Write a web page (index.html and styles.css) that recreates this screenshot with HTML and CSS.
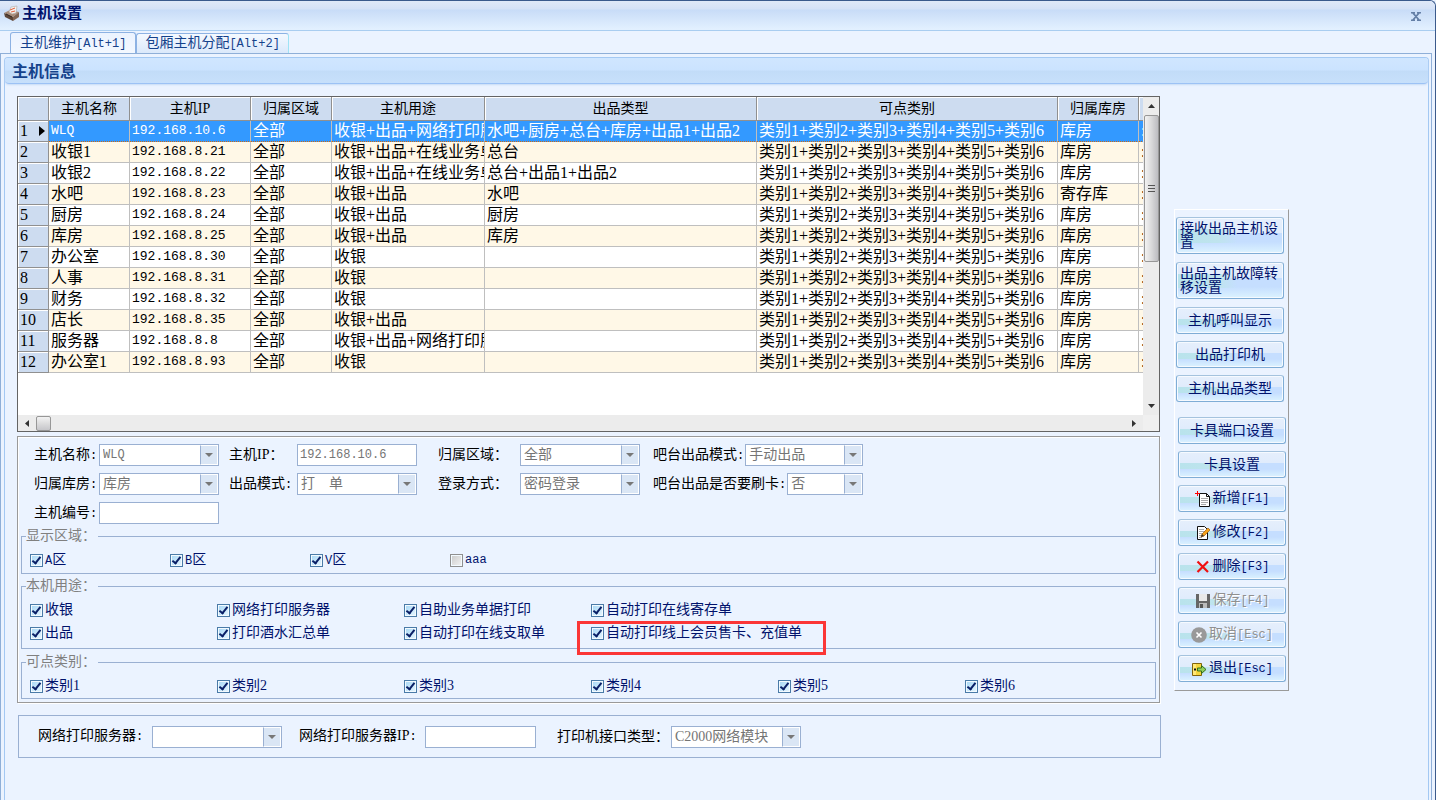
FILE: index.html
```html
<!DOCTYPE html>
<html lang="zh-CN">
<head>
<meta charset="utf-8">
<title>主机设置</title>
<link rel="stylesheet" href="styles.css">
</head>
<body>
<div class="window">
  <header class="titlebar">
    <svg class="app-icon" viewBox="0 0 16 16" width="16" height="16" aria-hidden="true">
      <path d="M0 8l6-3 9 2-6 5z" fill="#a98c78"/><path d="M0 8l9 4v4L1 12z" fill="#5d4638"/><path d="M9 12l6-5v5l-6 4z" fill="#806453"/>
      <path d="M5 7l2-5 6-1-1 7-4 1z" fill="#f4f2f0" stroke="#b0a9a4" stroke-width=".6"/><path d="M6 5l5-2M7 7l4-1" stroke="#e2603c"/><path d="M2 9l6 3" stroke="#33261f"/>
    </svg>
    <h1 class="title">主机设置</h1>
    <button class="close" type="button" aria-label="关闭"><svg viewBox="0 0 10 9" width="10" height="9"><path d="M0 .5h4M6 .5h4M0 8.500h4M6 8.500h4M2 1l6 7M8 1L2 8" stroke="#647fa6" stroke-width="1.800" fill="none"/></svg></button>
  </header>
  <nav class="tabs">
    <button class="tab active" type="button">主机维护<span class="mono">[Alt+1]</span></button>
    <button class="tab" type="button">包厢主机分配<span class="mono">[Alt+2]</span></button>
  </nav>
  <main class="page">
    <section class="group">
      <h2 class="group-title">主机信息</h2>
      <div class="body">
        <div class="left">
          <div class="grid-box">
            <div class="grid-view">
              <table class="hosts">
                <colgroup><col class="c-no"><col class="c-s"><col class="c-ip"><col class="c-s"><col class="c-use"><col class="c-out"><col class="c-cat"><col class="c-s"><col></colgroup>
                <thead><tr><th></th><th>主机名称</th><th>主机IP</th><th>归属区域</th><th>主机用途</th><th>出品类型</th><th>可点类别</th><th>归属库房</th><th></th></tr></thead>
                <tbody>
                <tr class="selected"><th>1<svg class="pointer" viewBox="0 0 6 10" width="6" height="10"><path d="M0 0l6 5-6 5z"/></svg></th><td class="mono">WLQ</td><td class="mono">192.168.10.6</td><td>全部</td><td>收银+出品+网络打印服</td><td>水吧+厨房+总台+库房+出品1+出品2</td><td>类别1+类别2+类别3+类别4+类别5+类别6</td><td>库房</td><td>:</td></tr>
                <tr><th>2</th><td>收银1</td><td class="mono">192.168.8.21</td><td>全部</td><td>收银+出品+在线业务单</td><td>总台</td><td>类别1+类别2+类别3+类别4+类别5+类别6</td><td>库房</td><td>:</td></tr>
                <tr><th>3</th><td>收银2</td><td class="mono">192.168.8.22</td><td>全部</td><td>收银+出品+在线业务单</td><td>总台+出品1+出品2</td><td>类别1+类别2+类别3+类别4+类别5+类别6</td><td>库房</td><td>:</td></tr>
                <tr><th>4</th><td>水吧</td><td class="mono">192.168.8.23</td><td>全部</td><td>收银+出品</td><td>水吧</td><td>类别1+类别2+类别3+类别4+类别5+类别6</td><td>寄存库</td><td>:</td></tr>
                <tr><th>5</th><td>厨房</td><td class="mono">192.168.8.24</td><td>全部</td><td>收银+出品</td><td>厨房</td><td>类别1+类别2+类别3+类别4+类别5+类别6</td><td>库房</td><td>:</td></tr>
                <tr><th>6</th><td>库房</td><td class="mono">192.168.8.25</td><td>全部</td><td>收银+出品</td><td>库房</td><td>类别1+类别2+类别3+类别4+类别5+类别6</td><td>库房</td><td>:</td></tr>
                <tr><th>7</th><td>办公室</td><td class="mono">192.168.8.30</td><td>全部</td><td>收银</td><td></td><td>类别1+类别2+类别3+类别4+类别5+类别6</td><td>库房</td><td>:</td></tr>
                <tr><th>8</th><td>人事</td><td class="mono">192.168.8.31</td><td>全部</td><td>收银</td><td></td><td>类别1+类别2+类别3+类别4+类别5+类别6</td><td>库房</td><td>:</td></tr>
                <tr><th>9</th><td>财务</td><td class="mono">192.168.8.32</td><td>全部</td><td>收银</td><td></td><td>类别1+类别2+类别3+类别4+类别5+类别6</td><td>库房</td><td>:</td></tr>
                <tr><th>10</th><td>店长</td><td class="mono">192.168.8.35</td><td>全部</td><td>收银+出品</td><td></td><td>类别1+类别2+类别3+类别4+类别5+类别6</td><td>库房</td><td>:</td></tr>
                <tr><th>11</th><td>服务器</td><td class="mono">192.168.8.8</td><td>全部</td><td>收银+出品+网络打印服</td><td></td><td>类别1+类别2+类别3+类别4+类别5+类别6</td><td>库房</td><td>:</td></tr>
                <tr><th>12</th><td>办公室1</td><td class="mono">192.168.8.93</td><td>全部</td><td>收银</td><td></td><td>类别1+类别2+类别3+类别4+类别5+类别6</td><td>库房</td><td>:</td></tr>
                </tbody>
              </table>
            </div>
            <div class="vbar">
              <svg class="arrow" viewBox="0 0 7 4" width="7" height="4"><path d="M0 4l3.500-4L7 4z"/></svg>
              <div class="vthumb"><i></i><i></i><i></i></div>
              <svg class="arrow end" viewBox="0 0 7 4" width="7" height="4"><path d="M0 0l3.500 4L7 0z"/></svg>
            </div>
            <div class="hbar">
              <svg class="arrow" viewBox="0 0 4 7" width="4" height="7"><path d="M4 0L0 3.500 4 7z"/></svg>
              <div class="hthumb"></div>
              <svg class="arrow end" viewBox="0 0 4 7" width="4" height="7"><path d="M0 0l4 3.500L0 7z"/></svg>
            </div>
            <div class="corner"></div>
          </div>

          <form class="details">
            <div class="fields">
              <label for="name">主机名称<span class="mono">:</span></label>
              <span class="combo"><select id="name" class="mono" disabled><option>WLQ</option></select></span>
              <label class="gap-s" for="ip">主机IP：</label>
              <input id="ip" class="box mono" value="192.168.10.6" disabled>
              <label class="gap-m" for="area">归属区域：</label>
              <span class="combo"><select id="area" disabled><option>全部</option></select></span>
              <span class="tail"><label for="barmode">吧台出品模式<span class="mono">:</span></label><span class="combo"><select id="barmode" disabled><option>手动出品</option></select></span></span>

              <label for="store">归属库房<span class="mono">:</span></label>
              <span class="combo"><select id="store" disabled><option>库房</option></select></span>
              <label class="gap-s" for="outmode">出品模式<span class="mono">:</span></label>
              <span class="combo"><select id="outmode" disabled><option>打　单</option></select></span>
              <label class="gap-m" for="login">登录方式：</label>
              <span class="combo"><select id="login" disabled><option>密码登录</option></select></span>
              <span class="tail"><label for="card">吧台出品是否要刷卡<span class="mono">:</span></label><span class="combo"><select id="card" disabled><option>否</option></select></span></span>

              <label for="code">主机编号<span class="mono">:</span></label>
              <input id="code" class="box">
            </div>
            <fieldset class="set areas">
              <legend>显示区域：</legend>
              <label class="check"><input type="checkbox" checked><span><span class="mono">A</span>区</span></label>
              <label class="check"><input type="checkbox" checked><span><span class="mono">B</span>区</span></label>
              <label class="check"><input type="checkbox" checked><span><span class="mono">V</span>区</span></label>
              <label class="check"><input type="checkbox" disabled><span class="mono">aaa</span></label>
            </fieldset>
            <fieldset class="set uses">
              <legend>本机用途：</legend>
              <label class="check"><input type="checkbox" checked><span>收银</span></label>
              <label class="check"><input type="checkbox" checked><span>网络打印服务器</span></label>
              <label class="check"><input type="checkbox" checked><span>自助业务单据打印</span></label>
              <label class="check"><input type="checkbox" checked><span>自动打印在线寄存单</span></label>
              <label class="check"><input type="checkbox" checked><span>出品</span></label>
              <label class="check"><input type="checkbox" checked><span>打印酒水汇总单</span></label>
              <label class="check"><input type="checkbox" checked><span>自动打印在线支取单</span></label>
              <label class="check marked"><input type="checkbox" checked><span>自动打印线上会员售卡、充值单</span></label>
            </fieldset>
            <fieldset class="set cats">
              <legend>可点类别：</legend>
              <label class="check"><input type="checkbox" checked><span>类别1</span></label>
              <label class="check"><input type="checkbox" checked><span>类别2</span></label>
              <label class="check"><input type="checkbox" checked><span>类别3</span></label>
              <label class="check"><input type="checkbox" checked><span>类别4</span></label>
              <label class="check"><input type="checkbox" checked><span>类别5</span></label>
              <label class="check"><input type="checkbox" checked><span>类别6</span></label>
            </fieldset>
          </form>

          <form class="printer">
            <label class="p1" for="psrv">网络打印服务器<span class="mono">:</span></label>
            <span class="combo wide-combo"><select id="psrv" disabled><option></option></select></span>
            <label class="p2" for="pip">网络打印服务器IP<span class="mono">:</span></label>
            <input id="pip" class="box pip">
            <label class="p3" for="ptype">打印机接口类型：</label>
            <span class="combo wide-combo"><select id="ptype" disabled><option>C2000网络模块</option></select></span>
          </form>
        </div>

        <aside class="side">
          <div class="stack first">
            <button class="btn tall" type="button">接收出品主机设置</button>
            <button class="btn tall" type="button">出品主机故障转移设置</button>
            <button class="btn" type="button">主机呼叫显示</button>
            <button class="btn" type="button">出品打印机</button>
            <button class="btn" type="button">主机出品类型</button>
          </div>
          <div class="stack second">
            <button class="btn" type="button">卡具端口设置</button>
            <button class="btn" type="button">卡具设置</button>
            <button class="btn" type="button"><svg viewBox="0 0 16 16" width="16" height="16"><path d="M4.500 2.500h7l3 3v10h-10z" fill="#fff" stroke="#111"/><path d="M11.500 2.500v3h3" fill="none" stroke="#111"/><path d="M6 7.500h7M6 9.500h7M6 11.500h7M6 13.500h5" stroke="#aaa"/><path d="M0 2.500h5M2.500 0v5" stroke="#f00"/></svg><span>新增<span class="mono">[F1]</span></span></button>
            <button class="btn" type="button"><svg viewBox="0 0 16 16" width="16" height="16"><path d="M2.500 1.500h7l3 3v10h-10z" fill="#fff" stroke="#111"/><path d="M4 4.500h5M4 6.500h6M4 8.500h4M4 10.500h3M4 12.500h3" stroke="#aaa"/><path d="M13 3l2 2-6 6-3 1 1-3z" fill="#f5a21c" stroke="#a45f0a" stroke-width=".7"/><path d="M6 12l1-3 2 2z" fill="#333"/></svg><span>修改<span class="mono">[F2]</span></span></button>
            <button class="btn" type="button"><svg viewBox="0 0 16 16" width="16" height="16"><path d="M2.500 2.500l10.500 10.500M13 2.500L2.500 13" stroke="#f01010" stroke-width="2.200"/></svg><span>删除<span class="mono">[F3]</span></span></button>
            <button class="btn" type="button" disabled><svg viewBox="0 0 16 16" width="16" height="16"><path d="M1 1h14v14H1z" fill="#666"/><path d="M4 1h8v7H4z" fill="#e9e9e9"/><path d="M4 10h8v5H4z" fill="#bbb"/><path d="M5 11h3v4H5z" fill="#555"/></svg><span>保存<span class="mono">[F4]</span></span></button>
            <button class="btn" type="button" disabled><svg viewBox="0 0 16 16" width="16" height="16"><circle cx="8" cy="8" r="7.800" fill="#999"/><path d="M5.500 5.500l5 5M10.500 5.500l-5 5" stroke="#fff" stroke-width="1.600"/></svg><span>取消<span class="mono">[Esc]</span></span></button>
            <button class="btn" type="button"><svg viewBox="0 0 16 16" width="16" height="16"><path d="M1.500 2.500h9v12h-9z" fill="#f4d63c" stroke="#80640c"/><path d="M2 3h3v11H2z" fill="#ffe875"/><path d="M3 8.500h2" stroke="#111" stroke-width="2"/><path d="M6.500 7h4V4.500l4.500 4-4.500 4V10h-4z" fill="#8fd05c" stroke="#346e1b"/></svg><span>退出<span class="mono">[Esc]</span></span></button>
          </div>
        </aside>
      </div>
    </section>
  </main>
</div>
</body>
</html>
```
FILE: styles.css
```css
*, *::before, *::after { box-sizing: border-box; }

body {
  margin: 0;
  background: #ebf3ff;
  color: #000;
  font: 400 14px/18px "Liberation Serif", "Noto Sans CJK SC", serif;
}

button, input, select { font: inherit; color: inherit; margin: 0; }
.mono { font-family: "Liberation Mono", "Noto Sans CJK SC", monospace; font-size: 12px; }

.window {
  display: flex;
  flex-direction: column;
  min-height: 100vh;
  border-top: 1px solid #3b5a8c;
  border-right: 1px solid #3b5a8c;
  border-radius: 0 6px 0 0;
}

/* title bar */
.titlebar {
  display: flex;
  align-items: center;
  height: 30px;
  padding: 0 14px 6px 4px;
  background: linear-gradient(#e0e9f8 0, #d5e2f7 8px, #c8dcf7 9px, #e2f0ff 28px);
  border-bottom: 1px solid #a9cdf0;
  border-radius: 0 6px 0 0;
}
.title { flex: 1; margin: 0 0 0 2px; font-size: 15px; line-height: 20px; font-weight: 700; color: #00126b; }
.close { align-self: flex-end; display: flex; padding: 0 0 3px; border: 0; background: none; }

/* tabs */
.tabs { display: flex; align-items: flex-end; height: 22px; padding-left: 10px; }
.tab {
  height: 20px;
  padding: 0 8px;
  border: 1px solid #8db2e3;
  border-right-color: #9fe3f5;
  border-bottom: 0;
  border-radius: 3px 3px 0 0;
  background: linear-gradient(#f4f9ff, #dbe9fb);
  color: #15428b;
  line-height: 18px;
}
.tab.active { height: 21px; padding: 0 9px; background: linear-gradient(#ebf3ff, #f3f8ff); border-right-color: #8db2e3; }

.page {
  flex: 1;
  display: flex;
  margin-right: 3px;
  padding: 3px 2px 0 3px;
  border: 1px solid #8fafd8;
  border-bottom: 0;
}
.group { flex: 1; border: 1px solid #a3c8f3; border-bottom: 0; border-radius: 4px 4px 0 0; min-width: 0; }
.group-title {
  height: 26px;
  margin: 0;
  padding: 3px 7px;
  border-bottom: 1px solid #9cc2f5;
  border-radius: 3px 3px 4px 4px;
  box-shadow: 0 1px 2px #c7dcf6;
  background: linear-gradient(#d0e6ff 0, #cbe3ff 12px, #c2dcf8 13px, #c7e0fb);
  font-size: 16px;
  line-height: 22px;
  font-weight: 700;
  color: #15428b;
}
.body { display: grid; grid-template-columns: minmax(0, 1fr) 115px; gap: 14px; padding: 12px 139px 0 12px; align-items: start; }
.left { min-width: 0; }

/* host list */
.grid-box {
  display: grid;
  grid-template-columns: minmax(0, 1fr) 16px;
  grid-template-rows: 318px 16px;
  border: 1px solid #646464;
  background: #fff;
}
.grid-view { overflow: hidden; }
.hosts { width: 1200px; table-layout: fixed; border-collapse: separate; border-spacing: 0; font-size: 16px; line-height: 20px; }
.hosts .mono { font-size: 13px; }
.c-no { width: 31px; }
.c-s { width: 81px; }
.c-ip { width: 121px; }
.c-use { width: 153px; }
.c-out { width: 272px; }
.c-cat { width: 301px; }
.hosts th, .hosts td {
  height: 21px;
  padding: 0 0 0 2px;
  overflow: hidden;
  white-space: nowrap;
  text-align: left;
  font-weight: 400;
  border-right: 1px solid #bfbfbf;
  border-bottom: 1px solid #bfbfbf;
}
.hosts th { background: #cddcf0; box-shadow: inset 1px 1px #fff; border-color: #909090; }
.hosts thead th { height: 24px; padding: 0; text-align: center; font-size: 14px; }
.hosts tbody tr:nth-child(even) td { background: #fff8e7; }
.hosts .selected td { background: #39f; color: #fff; border-bottom: 1px dotted #d06a10; }
.pointer { margin-left: 11px; }

/* scroll bars */
.vbar { display: flex; flex-direction: column; align-items: center; background: #ececec; padding: 7px 0; }
.vthumb {
  display: flex; flex-direction: column; justify-content: center; align-items: center; gap: 2px;
  width: 15px; height: 147px; margin-top: 7px;
  border: 1px solid #979797; border-radius: 2px;
  background: linear-gradient(to right, #f3f3f3, #d9d9da 50%, #bcbcc0);
}
.vthumb i { width: 7px; height: 1px; background: #555; }
.hbar { display: flex; align-items: center; padding: 0 7px; background: #ececec; }
.hthumb { width: 15px; height: 15px; margin-left: 7px; border: 1px solid #979797; border-radius: 2px; background: linear-gradient(#f3f3f3, #dcdcdd 50%, #c6c6ca); }
.arrow { fill: #333; }
.vbar .end { margin-top: auto; }
.hbar .end { margin-left: auto; }
.corner { background: #f0f0f0; }

/* detail form */
.details { margin-top: 4px; padding: 7px 3px 3px; border: 1px solid #9a9a9a; box-shadow: inset 1px 1px #fff, 1px 1px #fff; }
.fields {
  display: grid;
  grid-template-columns: 65px 120px 78px 120px 103px 120px 223px;
  gap: 7px 0;
  padding-left: 13px;
  align-items: center;
}
.fields label { white-space: nowrap; }
.gap-s { padding-left: 10px; }
.gap-m { padding-left: 21px; }
.tail { display: flex; align-items: center; padding-left: 13px; }
.tail .combo { flex: 1; margin-left: 1px; }
.box { width: 100%; height: 22px; padding: 0 2px; border: 1px solid #9ab0d2; border-radius: 0; background: #fff; }
.box:disabled { color: #757575; }
.combo { position: relative; display: block; height: 22px; }
.combo select {
  appearance: none;
  display: block;
  width: 100%;
  height: 22px;
  padding: 0 19px 0 3px;
  border: 1px solid #9ab0d2;
  border-radius: 0;
  background: #fff;
  color: #757575;
  opacity: 1;
}
.combo::before { content: ""; position: absolute; top: 1px; right: 1px; bottom: 1px; width: 18px; border: 1px solid #fff; border-left-color: #9ab0d2; background: #dae6f5; pointer-events: none; }
.combo::after { content: ""; position: absolute; top: 9px; right: 6px; border: 4px solid transparent; border-top-color: #777; border-bottom: 0; pointer-events: none; }

.set {
  display: grid;
  margin: 4px 0 0;
  padding: 7px 8px 3px;
  border: 1px solid #9ab0d2;
  gap: 5px 0;
  min-width: 0;
}
.set legend { margin-left: -4px; padding: 0; width: 72px; height: 16px; line-height: 16px; color: #808080; }
.areas { grid-template-columns: repeat(4, 140px); padding-bottom: 4px; }
.uses { grid-template-columns: repeat(4, 187px); padding-bottom: 6px; }
.cats { grid-template-columns: repeat(6, 187px); margin-top: 5px; }
.check { display: flex; align-items: center; gap: 2px; height: 18px; white-space: nowrap; color: #00126b; position: relative; }
.check input {
  appearance: none;
  flex: none;
  position: relative;
  width: 13px;
  height: 13px;
  border: 1px solid #4a7ba8;
  box-shadow: inset 0 0 0 1px #f2faff;
  background: linear-gradient(135deg, #a5d6f5, #e8f7ff);
}
.check input:checked::after {
  content: "";
  position: absolute;
  left: 3px;
  top: 0;
  width: 5px;
  height: 9px;
  border: solid #0a1f66;
  border-width: 0 2px 2px 0;
  transform: rotate(38deg);
}
.check input:disabled { border-color: #8f8f8f; background: linear-gradient(135deg, #c9c9c9, #f4f4f4); }
.marked::after { content: ""; position: absolute; left: -14px; top: -3px; width: 249px; height: 34px; border: 3px solid #fb3636; pointer-events: none; }

/* printer strip */
.printer { display: flex; align-items: center; height: 43px; margin: 12px -1px 0 1px; padding-left: 19px; border: 1px solid #9ab0d2; white-space: nowrap; }
.p1 { width: 114px; }
.p2 { width: 143px; padding-left: 17px; }
.p3 { width: 135px; padding-left: 21px; }
.wide-combo { width: 130px; }
.pip { width: 111px; }

/* command column */
.side { margin-top: 113px; padding: 7px 0 8px; border: 1px solid #fff; border-right-color: #9a9a9a; border-bottom-color: #9a9a9a; }
.stack { display: flex; flex-direction: column; gap: 7px; }
.first { padding: 0 4px 0 1px; }
.second { padding: 0 2px 0 3px; margin-top: 15px; }
.btn {
  display: flex;
  align-items: center;
  justify-content: center;
  gap: 2px;
  height: 27px;
  padding: 0 3px;
  border: 1px solid #7fadd6;
  border-top-color: #a5c3de;
  border-radius: 3px;
  box-shadow: inset 0 0 0 1px #f6faff;
  background:
    linear-gradient(to right, #b9e3ec, #bfe4ee 55%, transparent 80%) 1px 11px / 70% 6px no-repeat,
    linear-gradient(#e6effc 0, #e0ecfc 42%, #c5deff 44%, #c5deff 68%, #dcf3ff);
  color: #00126b;
  white-space: nowrap;
}
.btn.tall { height: 37px; margin-bottom: 1px; line-height: 14px; text-align: left; white-space: normal; background-size: 70% 14px, auto; }
.btn:disabled { color: #909090; text-shadow: 1px 1px #fff; }
```
